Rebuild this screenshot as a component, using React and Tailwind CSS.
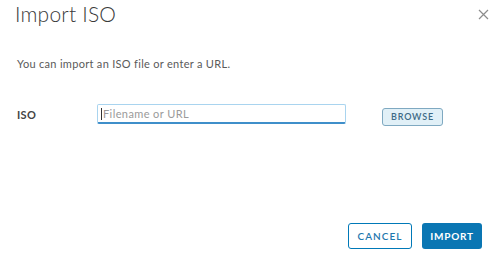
export default function App() {
  return (
    <div className="w-[499px] h-[257px] bg-white flex flex-col font-['Lato',_'Open_Sans',_sans-serif] text-[#565656]">
      <div className="flex items-start justify-between pl-[15px] pr-[10px] pt-[1px]">
        <h1 className="text-[21px] font-light leading-[26px] text-[#3a3a3a] tracking-[0.2px]">Import ISO</h1>
        <button className="mt-[7px] w-[12px] h-[12px] flex items-center justify-center text-[#9a9a9a]">
          <svg width="11" height="11" viewBox="0 0 11 11">
            <path d="M1 1L10 10M10 1L1 10" stroke="#8c8c8c" strokeWidth="1.2" />
          </svg>
        </button>
      </div>
      <p className="pl-[17px] mt-[30px] text-[11px] leading-[14px] text-[#5a5a5a] tracking-[0.3px]">You can import an ISO file or enter a URL.</p>
      <div className="flex items-start pl-[17px] mt-[33px]">
        <label className="w-[80px] text-[11px] font-bold leading-[19px] mt-[1px] text-[#444] tracking-[0.3px]">ISO</label>
        <div className="w-[249px] h-[20px] border border-[#a9d4ef] border-b-2 border-b-[#3f8fca] rounded-[2px] flex items-center pl-[3px]">
          <span className="w-px h-[12px] bg-[#333] mr-px" />
          <span className="text-[11px] text-[#9a9a9a] leading-none tracking-[0.4px]">Filename or URL</span>
        </div>
        <button className="ml-[36px] mt-[4px] w-[61px] h-[18px] border border-[#7fa9c1] bg-[#e1f0f7] rounded-[3px] text-[9px] font-semibold tracking-[0.8px] text-[#3d6a86] flex items-center justify-center">BROWSE</button>
      </div>
      <div className="flex-1" />
      <div className="flex justify-end gap-[10px] pr-[17px] pb-[8px]">
        <button className="w-[64px] h-[26px] border border-[#0079b8] rounded-[3px] text-[10px] font-semibold tracking-[1px] text-[#1f78ae] flex items-center justify-center bg-white">CANCEL</button>
        <button className="w-[60px] h-[26px] bg-[#0a76b3] rounded-[3px] text-[10px] font-bold tracking-[0.8px] text-white flex items-center justify-center">IMPORT</button>
      </div>
    </div>
  );
}
